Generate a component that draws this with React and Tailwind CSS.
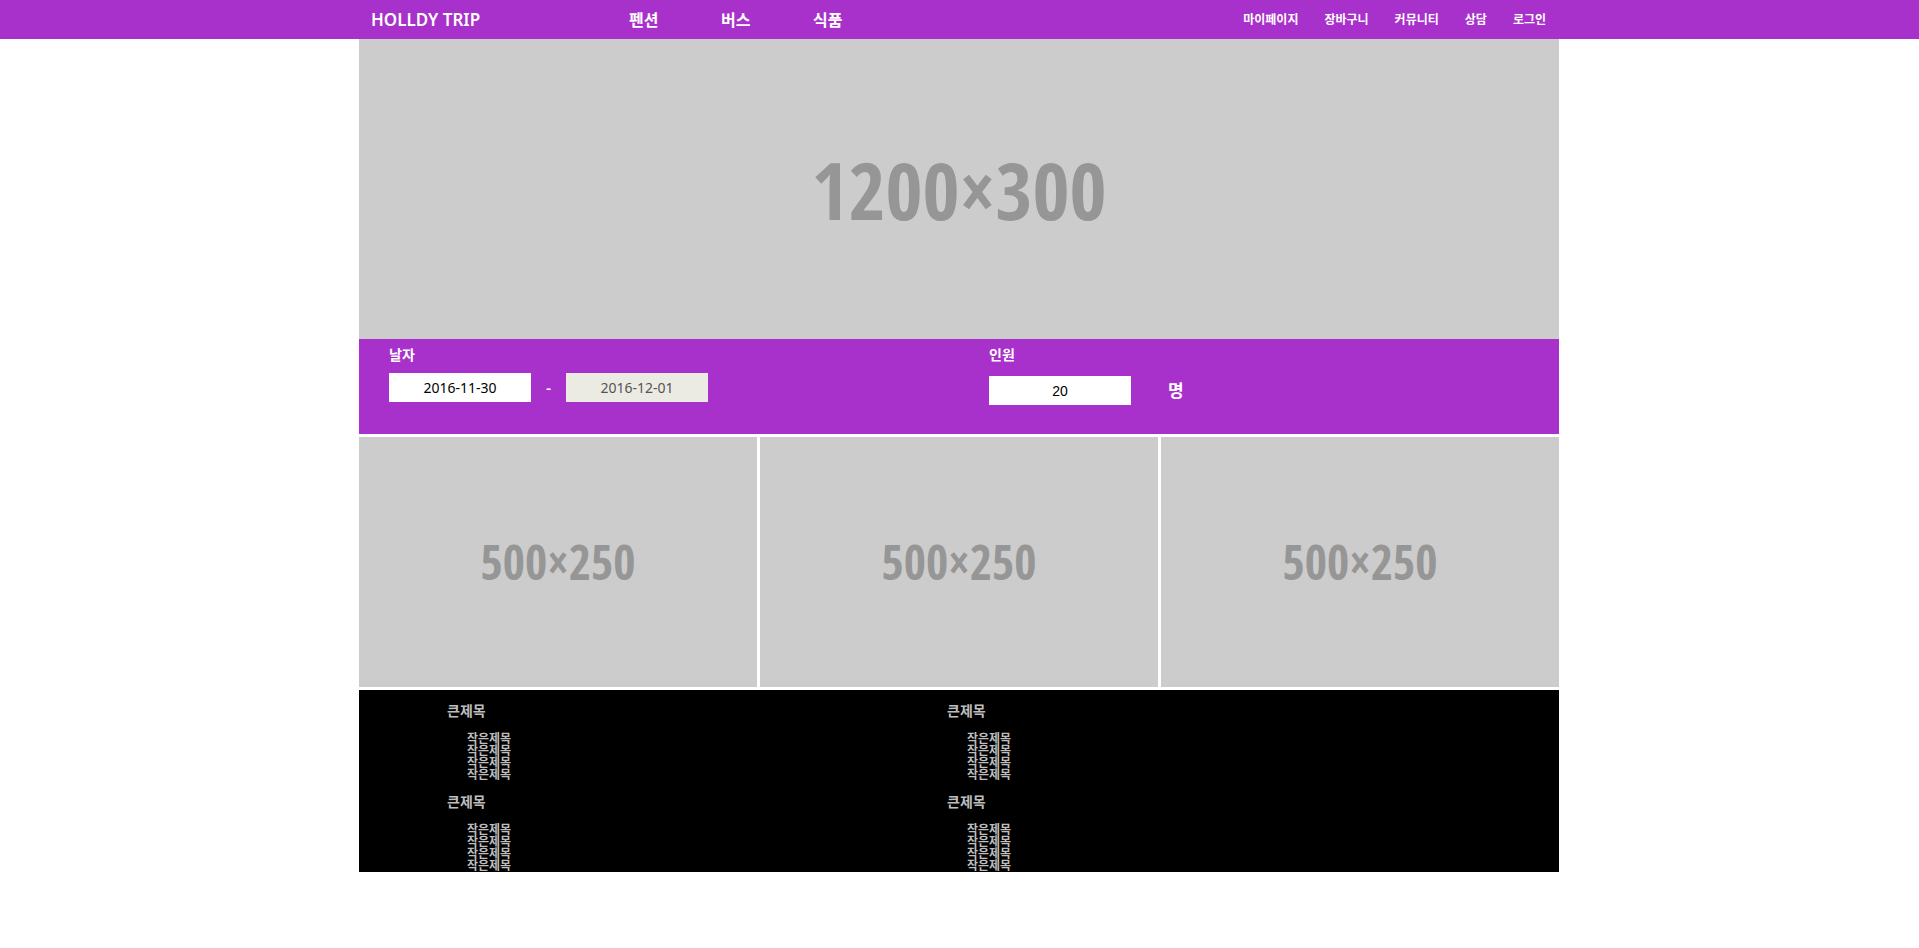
import { useState } from "react";

const mainLinks = ["펜션", "버스", "식품"];
const userLinks = ["마이페이지", "장바구니", "커뮤니티", "상담", "로그인"];
const smallTitles = ["작은제목", "작은제목", "작은제목", "작은제목"];

const fieldClass =
  "h-[29px] w-[142px] appearance-none border-0 text-center outline-none";
const imageClass =
  "flex items-center justify-center bg-[#cccccc] text-[#969696] font-['Noto_Sans_ExtraCondensed','Open_Sans_Condensed','Roboto_Condensed',sans-serif]";

function Header() {
  return (
    <header className="bg-[#a931cb] pr-px text-white">
      <div className="mx-auto flex h-[39px] max-w-[1200px] items-center justify-between pl-3 pr-[13px]">
        <div className="flex items-center">
          <a href="#" className="w-[258px] text-[17px] font-semibold">HOLLDY TRIP</a>
          <nav aria-label="상품">
            <ul className="flex text-base font-bold">
              {mainLinks.map((label) => (
                <li key={label} className="w-[92px]"><a href="#">{label}</a></li>
              ))}
            </ul>
          </nav>
        </div>
        <nav aria-label="회원">
          <ul className="flex gap-[26px] text-xs font-bold">
            {userLinks.map((label) => (
              <li key={label}><a href="#">{label}</a></li>
            ))}
          </ul>
        </nav>
      </div>
    </header>
  );
}

function SearchForm() {
  const [start, setStart] = useState("2016-11-30");
  const [people, setPeople] = useState("20");
  return (
    <form className="grid min-h-[95px] grid-cols-2 bg-[#a931cb] text-white">
      <div className="px-[30px] pt-1.5">
        <label htmlFor="start" className="block text-sm font-bold">날자</label>
        <div className="mt-2 flex items-center">
          <input
            id="start"
            value={start}
            onChange={(e) => setStart(e.target.value)}
            className={`${fieldClass} bg-white text-sm text-black`}
          />
          <span className="w-[35px] text-center leading-5 font-medium">-</span>
          <input
            aria-label="종료 날자"
            value="2016-12-01"
            disabled
            className={`${fieldClass} bg-[#ebebe4] text-sm text-[#545454]`}
          />
        </div>
      </div>
      <div className="px-[30px] pt-1.5">
        <label htmlFor="people" className="block text-sm font-bold">인원</label>
        <div className="mt-[11px] flex items-center gap-[37px]">
          <input
            id="people"
            value={people}
            onChange={(e) => setPeople(e.target.value)}
            className={`${fieldClass} bg-white font-['Liberation_Sans',sans-serif] text-sm text-black`}
          />
          <span className="text-[17px] leading-6 font-bold">명</span>
        </div>
      </div>
    </form>
  );
}

function FooterGroup() {
  return (
    <section className="pt-[11px]">
      <h2 className="text-sm leading-5 font-bold">큰제목</h2>
      <ul className="mt-3 pl-5 text-xs leading-3 font-bold">
        {smallTitles.map((title, i) => (
          <li key={i}><a href="#">{title}</a></li>
        ))}
      </ul>
    </section>
  );
}

export default function App() {
  return (
    <div className="min-h-screen bg-white font-['Noto_Sans','Noto_Sans_CJK_KR',sans-serif]">
      <Header />
      <div className="pr-px">
        <main className="mx-auto max-w-[1200px]">
          <div className={`${imageClass} h-[300px] text-[80px] font-semibold`}>1200×300</div>
          <SearchForm />
          <div className="my-[3px] grid grid-cols-3 gap-[3px]">
            {[1, 2, 3].map((n) => (
              <div key={n} className={`${imageClass} h-[250px] text-5xl font-medium`}>
                500×250
              </div>
            ))}
          </div>
        </main>
        <footer className="mx-auto grid max-w-[1200px] grid-cols-[500px_1fr] bg-black pl-[88px] text-[#bdbdbd]">
          <FooterGroup />
          <FooterGroup />
          <FooterGroup />
          <FooterGroup />
        </footer>
      </div>
    </div>
  );
}
